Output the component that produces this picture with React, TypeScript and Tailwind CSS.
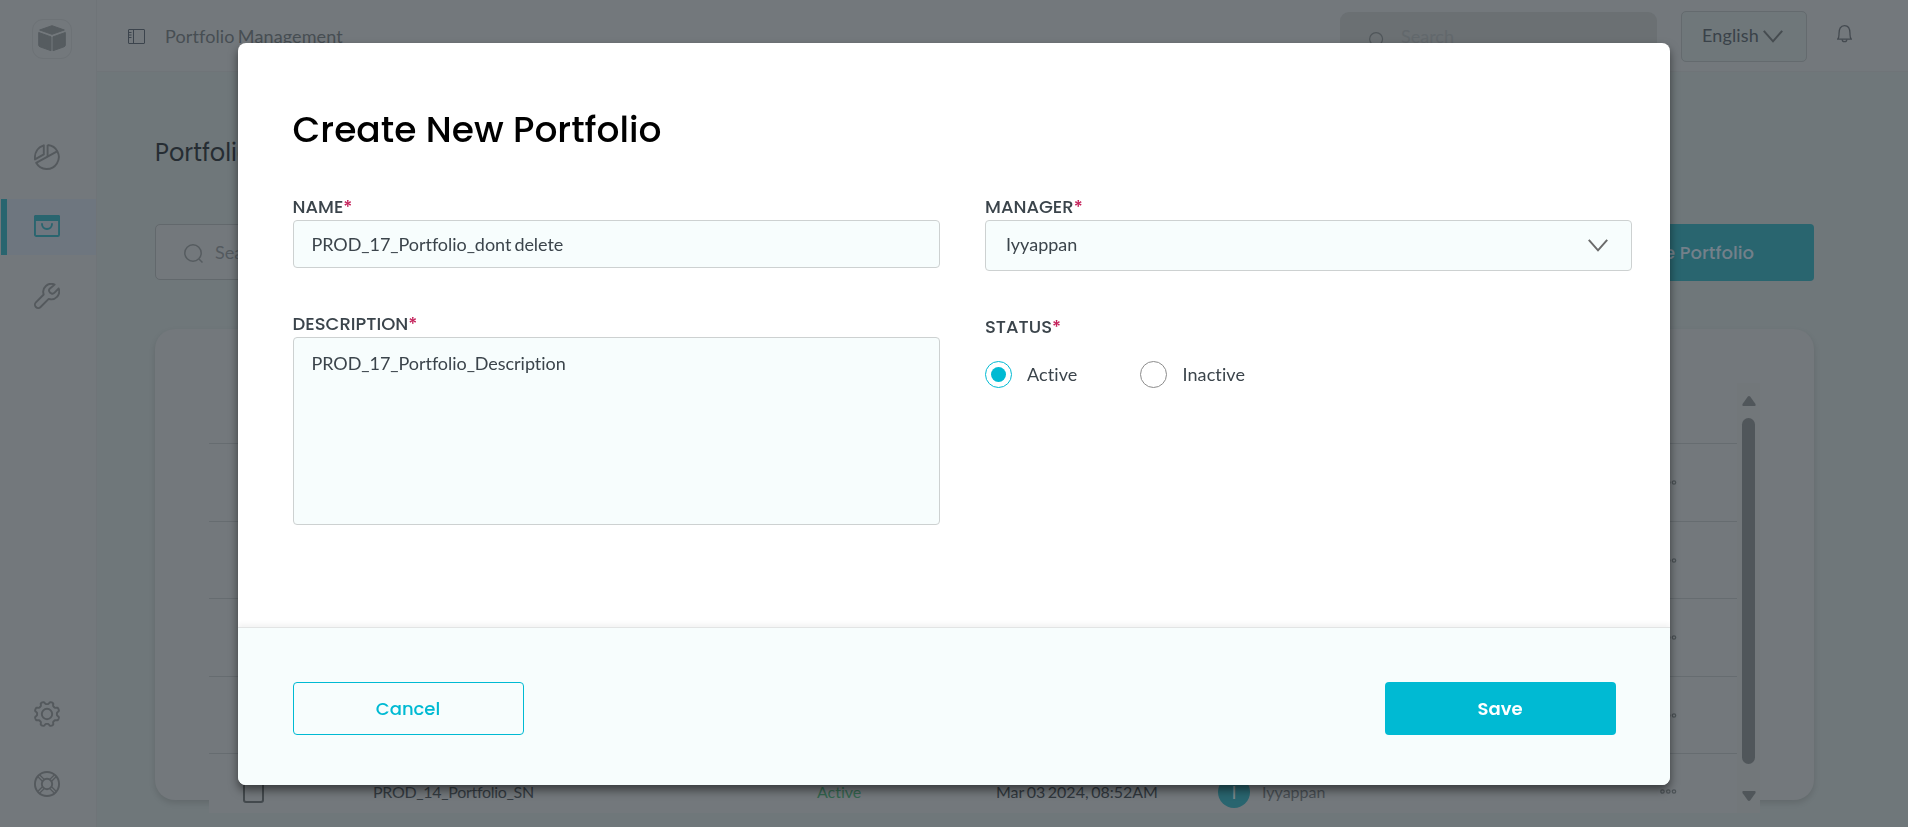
import React from "react";

const poppins = "font-['Poppins','Inter',sans-serif] [font-feature-settings:'cv11'] whitespace-nowrap";
const lato = "font-['Lato',sans-serif] [font-variant-ligatures:none] [word-spacing:-1.5px] whitespace-nowrap";

function PieIcon() {
  return (
    <svg width="26" height="26" viewBox="0 0 26 26" fill="none" stroke="#54595d" strokeWidth="1.9" strokeLinejoin="round">
      <path d="M13.6 .95A12.05 12.05 0 1 1 2.2 18.8L24 6.8" />
      <path d="M13.6 .95V12.3" />
      <path d="M9.8 1.3V10.4L.95 15.4C.4 8.5 3.8 3.1 9.8 1.3Z" />
    </svg>
  );
}

function PortfolioIcon() {
  return (
    <svg width="26" height="22" viewBox="0 0 26 22" fill="none" stroke="#29656f" strokeWidth="1.9">
      <rect x=".95" y=".95" width="24.1" height="20.1" rx="1.3" />
      <path d="M0 1.5A1.5 1.5 0 0 1 1.5 0H24.5A1.5 1.5 0 0 1 26 1.5V6H0Z" fill="#29656f" stroke="none" />
      <path d="M8 8.3V9A5 5 0 0 0 18 9V8.3" />
    </svg>
  );
}

function WrenchIcon() {
  return (
    <svg width="26" height="26" viewBox="0 0 26 26" fill="none" stroke="#54595d" strokeWidth="1.9" strokeLinejoin="round">
      <path d="M20.6 1.6A8 8 0 0 0 9.7 11.5L1.9 19.3A3.3 3.3 0 0 0 6.6 24L14.7 15.9A8 8 0 0 0 24.7 5.5L20.3 9.9C19.6 10.6 18.4 10.8 17.5 10.5L16 9.6L15.2 8.2C14.9 7.4 15 6.4 15.7 5.8Z" />
    </svg>
  );
}

function gearPath() {
  const pts: string[] = [];
  const steps = 160;
  for (let i = 0; i <= steps; i++) {
    const a = (i / steps) * Math.PI * 2;
    const wave = Math.cos(8 * (a - Math.PI / 8));
    const r = 11.2 + 1.3 * Math.tanh(2.4 * wave);
    pts.push(`${(13 + r * Math.cos(a)).toFixed(2)} ${(13 + r * Math.sin(a)).toFixed(2)}`);
  }
  return "M" + pts.join("L") + "Z";
}

function GearIcon() {
  return (
    <svg width="26" height="26" viewBox="0 0 26 26" fill="none" stroke="#54595d" strokeWidth="1.9" strokeLinejoin="round">
      <path d={gearPath()} />
      <circle cx="13" cy="13" r="5.2" />
    </svg>
  );
}

function SupportIcon() {
  return (
    <svg width="26" height="26" viewBox="0 0 26 26" fill="none" stroke="#54595d" strokeWidth="1.9">
      <circle cx="13" cy="13" r="12.05" />
      <circle cx="13" cy="13" r="5.2" />
      <path d="M4.2 6 8.4 10.2M6 4.2 10.2 8.4M21.8 6 17.6 10.2M20 4.2 15.8 8.4M4.2 20 8.4 15.8M6 21.8 10.2 17.6M21.8 20 17.6 15.8M20 21.8 15.8 17.6" strokeWidth="1.3" />
    </svg>
  );
}

function CubeLogo() {
  return (
    <div className="flex h-10 w-10 items-center justify-center rounded-[11px] border border-[#6d7276]">
      <svg width="28" height="27" viewBox="0 0 28 27" fill="#565c60" stroke="#565c60" strokeWidth="1" strokeLinejoin="round">
        <path d="M14 .7 26.3 5 14 9.3 1.7 5Z" />
        <path d="M.7 7.5 13 11.9V25.7L2 21.8Q.7 21.3 .7 20Z" />
        <path d="M27.3 7.5 15 11.9V25.7L26 21.8Q27.3 21.3 27.3 20Z" />
      </svg>
    </div>
  );
}

function SearchIcon({ size, className }: { size: number; className: string }) {
  return (
    <svg width={size} height={size} viewBox="0 0 19 19" fill="none" stroke="currentColor" strokeWidth="1.5" className={className}>
      <circle cx="9" cy="9" r="8.2" />
      <path d="M15 15 18.5 18.5" />
    </svg>
  );
}

function Chevron({ className }: { className: string }) {
  return (
    <svg width="20" height="13" viewBox="0 0 20 13" fill="none" stroke="currentColor" strokeWidth="2" className={className}>
      <path d="M.8 .8 10 11.3 19.2 .8" />
    </svg>
  );
}

function Dots() {
  return (
    <svg width="17" height="5" viewBox="0 0 17 5" fill="none" stroke="#4d5357" strokeWidth="1.2">
      <circle cx="2.5" cy="2.5" r="1.7" />
      <circle cx="8.3" cy="2.5" r="1.7" />
      <circle cx="14" cy="2.5" r="1.7" />
    </svg>
  );
}

function Sidebar() {
  return (
    <aside className="flex h-full w-[97px] shrink-0 flex-col border-r border-[#6f7478] bg-[#73787c]">
      <div className="flex h-[115px] pl-[31.5px] pt-[18.5px]">
        <CubeLogo />
      </div>
      <div className="flex h-[84px] items-center pl-[34px]">
        <PieIcon />
      </div>
      <div className="ml-px flex h-14 items-center border-l-[6px] border-[#29656f] bg-[#6e767f] pb-0.5 pl-[27px]">
        <PortfolioIcon />
      </div>
      <div className="flex h-[82px] items-center pl-[34px]">
        <WrenchIcon />
      </div>
      <div className="mt-auto flex flex-col gap-11 pb-[30px] pl-[34px]">
        <GearIcon />
        <SupportIcon />
      </div>
    </aside>
  );
}

function Header() {
  return (
    <header className="flex h-[72px] shrink-0 items-start border-b border-[#6f7478] bg-[#73787c]">
      <svg width="17" height="15" viewBox="0 0 17 15" fill="none" stroke="#3c444d" className="ml-[31px] mt-[29px]">
        <rect x=".5" y=".5" width="16" height="14" rx=".5" />
        <path d="M5.5 .5V14.5M1 3.5H3.5M1 6H3.5M1 8.5H3.5" />
      </svg>
      <span className={`${lato} ml-5 mt-6 text-[18px] leading-6 tracking-[0.12px] text-[#474e53]`}>Portfolio Management</span>
      <div className="ml-auto mt-3 flex h-[50px] w-[317px] items-center rounded-[9px] bg-[#6b7073] pl-[29px]">
        <SearchIcon size={15} className="mt-1 text-[#50565a]" />
        <span className={`${lato} -mt-0.5 ml-[17px] text-[18px] leading-6 text-[#62686c]`}>Search</span>
      </div>
      <div className="ml-6 mt-[11px] flex h-[51px] w-[126px] items-center rounded-[5px] border border-[#646a6e] bg-[#6f777a] pl-5">
        <span className={`${lato} -mt-1 text-[18px] leading-6 tracking-[0.12px] text-[#3a4249]`}>English</span>
        <Chevron className="ml-1 text-[#464c50]" />
      </div>
      <svg width="15" height="18" viewBox="0 0 15 18" fill="none" stroke="#444a50" strokeWidth="1.3" className="ml-[30px] mr-[56px] mt-[25px]">
        <path d="M.6 14.2H14.4C12.8 13 13 11.5 13 8.5C13 4 11.5 .7 7.5 .7S2 4 2 8.5C2 11.5 2.2 13 .6 14.2Z" />
        <path d="M5.2 14.4A2.3 2.3 0 0 0 9.8 14.4" />
      </svg>
    </header>
  );
}

function TableRow({ height }: { height: string }) {
  return (
    <div className={`flex shrink-0 items-center border-t border-[#666c70] ${height}`}>
      <div className="ml-auto mr-[60px]">
        <Dots />
      </div>
    </div>
  );
}

function PortfolioTable() {
  return (
    <div className="ml-[54px] flex h-[430px] w-[1551px] bg-[#73787c]">
      <div className="flex w-[1528px] flex-col pt-[60px]">
        <TableRow height="h-[78px]" />
        <TableRow height="h-[77px]" />
        <TableRow height="h-[78px]" />
        <TableRow height="h-[77px]" />
        <div className="flex h-[59px] shrink-0 border-t border-[#666c70] pl-[34px]">
          <div className="mt-[25px] h-6 w-[21px] rounded-[3px] border-2 border-[#43494d]" />
          <span className={`${lato} ml-[109px] mt-[26px] w-[444px] text-[16px] leading-6 tracking-[-0.3px] text-[#343b41]`}>PROD_14_Portfolio_SN</span>
          <span className={`${lato} mt-[26px] w-[179px] text-[16px] leading-6 text-[#33664f]`}>Active</span>
          <span className={`${lato} mt-[26px] w-[222px] text-[16px] leading-6 text-[#30373d]`}>Mar 03 2024, 08:52AM</span>
          <div className={`${lato} mt-[22px] flex h-8 w-8 items-center justify-center rounded-full bg-[#29656f] text-[18px] text-[#7b8a8e]`}>I</div>
          <span className={`${lato} ml-3 mt-[26px] text-[16px] leading-6 text-[#474d52]`}>Iyyappan</span>
          <div className="ml-auto mr-[60px] mt-[35px]">
            <Dots />
          </div>
        </div>
      </div>
      <div className="flex w-[23px] flex-col items-center bg-[#72777a]">
        <svg width="14" height="10" viewBox="0 0 14 10" fill="#50565a" className="mt-[13px]">
          <path d="M5.7 .7Q7 -.6 8.3 .7L13.3 7.7Q14.3 10 12.5 10H1.5Q-.3 10 .7 7.7Z" />
        </svg>
        <div className="mt-3 h-[346px] w-[13px] rounded-full bg-[#50565a]" />
        <svg width="14" height="10" viewBox="0 0 14 10" fill="#50565a" className="mt-[27px]">
          <path d="M5.7 9.3Q7 10.6 8.3 9.3L13.3 2.3Q14.3 0 12.5 0H1.5Q-.3 0 .7 2.3Z" />
        </svg>
      </div>
    </div>
  );
}

function Page() {
  return (
    <div className="flex h-[827px] w-full overflow-hidden bg-[#6f777a]">
      <Sidebar />
      <div className="flex min-w-0 flex-1 flex-col">
        <Header />
        <main className="flex flex-col pl-[58px] pr-[94px] pt-[63px]">
          <h1 className={`${poppins} text-[24px] leading-9 text-[#262d33]`}>Portfolio</h1>
          <div className="mt-[53px] flex justify-between">
            <div className="flex h-14 w-[440px] items-center rounded-[5px] border border-[#62686c] bg-[#73787c] pl-7">
              <SearchIcon size={19} className="mt-0.5 text-[#565c60]" />
              <span className={`${lato} ml-3 text-[18px] leading-6 text-[#545a5f]`}>Search</span>
            </div>
            <div className="flex h-[57px] w-[264px] items-center justify-end rounded bg-[#29656f] pr-[60px]">
              <span className={`${poppins} text-[18px] font-medium leading-6 text-[#73808a]`}>Create Portfolio</span>
            </div>
          </div>
          <div className="mt-12 h-[471px] rounded-[20px] bg-[#73787c] pt-[54px] shadow-[0_3px_6px_rgba(0,0,0,0.12)]">
            <PortfolioTable />
          </div>
        </main>
      </div>
    </div>
  );
}

function Label({ children }: { children: React.ReactNode }) {
  return (
    <div className={`${poppins} mb-px text-[18px] font-medium leading-6 text-[#3b444b]`}>
      {children}
      <span className="text-[#c4215a]">*</span>
    </div>
  );
}

function Radio({ label, checked }: { label: string; checked?: boolean }) {
  return (
    <div className="flex items-center">
      <div className={`flex h-[27px] w-[27px] items-center justify-center rounded-full border ${checked ? "border-[#00bad3]" : "border-[#8c8c8c]"}`}>
        {checked && <div className="h-[15px] w-[15px] rounded-full bg-[#00bad3]" />}
      </div>
      <span className={`${lato} -mt-0.5 ml-[15px] text-[18px] leading-6 tracking-[0.1px] text-[#3b444b]`}>{label}</span>
    </div>
  );
}

function CreatePortfolioDialog() {
  return (
    <div className="fixed inset-0 flex items-start justify-center pt-[43px]">
      <div role="dialog" className="flex h-[742px] w-[1432px] flex-col overflow-hidden rounded-lg bg-white shadow-[0_5px_10px_rgba(0,0,0,0.5)]">
        <div className="flex-1 pl-[54.5px] pr-[38px] pt-[60px]">
          <h2 className={`${poppins} text-[36px] font-medium leading-[54px] text-black`}>Create New Portfolio</h2>
          <div className="mt-[38px] grid grid-cols-2 gap-x-[45.5px]">
            <div>
              <Label>NAME</Label>
              <div className={`${lato} flex h-12 items-center rounded border border-[#cdd1d1] bg-[#f7fdfd] pl-[18px] text-[18px] tracking-[-0.05px] text-[#3b444b]`}>
                PROD_17_Portfolio_dont delete
              </div>
              <div className="h-11" />
              <Label>DESCRIPTION</Label>
              <div className={`${lato} h-[188px] rounded border border-[#cdd1d1] bg-[#f7fdfd] pl-[18px] pt-[13px] text-[18px] leading-6 tracking-[-0.05px] text-[#3b444b]`}>
                PROD_17_Portfolio_Description
              </div>
            </div>
            <div>
              <Label>MANAGER</Label>
              <div className={`${lato} flex h-[51px] items-center justify-between rounded border border-[#cdd1d1] bg-[#f7fdfd] pl-5 pr-[23px] text-[18px] text-[#3b444b]`}>
                <span className="-mt-0.5">Iyyappan</span>
                <Chevron className="text-[#6b6b6b]" />
              </div>
              <div className="h-11" />
              <Label>STATUS</Label>
              <div className="mt-[22px] flex gap-[63px]">
                <Radio label="Active" checked />
                <Radio label="Inactive" />
              </div>
            </div>
          </div>
        </div>
        <div className="flex h-[158px] justify-between border-t border-[#e2e4e4] bg-[#f7fdfd] px-[54.5px] pt-[54px] shadow-[0_-3px_5px_rgba(0,0,0,0.05)]">
          <button className={`${poppins} h-[53px] w-[231px] rounded border border-[#00bad3] text-[18px] font-medium text-[#00bad3]`}>Cancel</button>
          <button className={`${poppins} h-[53px] w-[231px] rounded bg-[#00bad3] text-[18px] font-semibold text-white`}>Save</button>
        </div>
      </div>
    </div>
  );
}

export default function App() {
  return (
    <>
      <Page />
      <CreatePortfolioDialog />
    </>
  );
}
